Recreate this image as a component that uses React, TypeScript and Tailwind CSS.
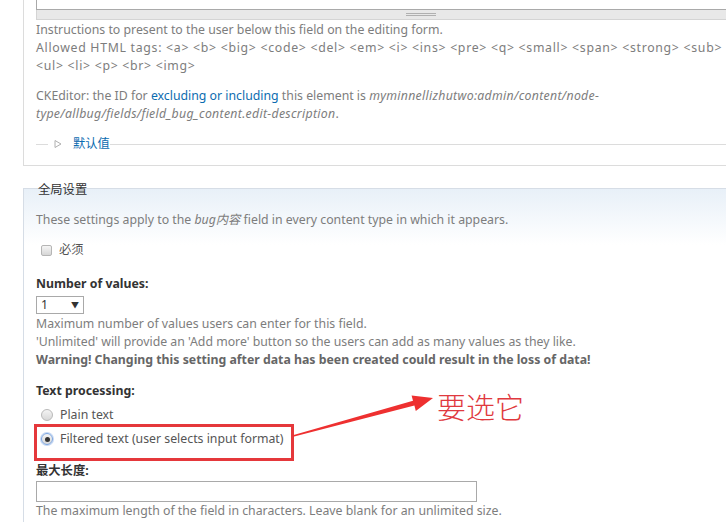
import React from "react";

const Radio = ({ checked }: { checked?: boolean }) => (
  <span
    className={`inline-flex w-[12px] h-[12px] rounded-full items-center justify-center bg-gradient-to-b from-[#f4f4f4] to-[#d8d8d8] ${
      checked ? "border border-[#7aa4e0] shadow-[0_0_0_1px_#c6d8f3]" : "border border-[#b9b9b9]"
    }`}
  >
    {checked && <span className="w-[5px] h-[5px] rounded-full bg-[#333]" />}
  </span>
);

export default function App() {
  return (
    <div
      className="relative w-[726px] h-[522px] overflow-hidden bg-white text-[12.3px] leading-[18px] text-[#7d7d7d]"
      style={{ fontFamily: '"Noto Sans", "Noto Sans CJK SC", sans-serif' }}
    >
      <div className="pl-[23px] w-[820px]">
        {/* Field description block */}
        <div className="border-l border-b border-[#dcdcdc] pl-[12px] h-[166px]">
          <div className="h-[10px] border-l border-b border-[#a9a9a9] bg-white" />
          <div className="h-[10px] bg-[#e8e8e8] border-l border-b border-[#d4d4d4] flex items-center">
            <div className="ml-[369px] w-[30px] flex flex-col gap-[1px]">
              <span className="h-px bg-[#b0b0b0]" />
              <span className="h-px bg-[#b0b0b0]" />
            </div>
          </div>
          <div className="mt-[1px] whitespace-nowrap">
            Instructions to present to the user below this field on the editing form.
            <br />
            <span className="tracking-[0.7px]">
              Allowed HTML tags: &lt;a&gt; &lt;b&gt; &lt;big&gt; &lt;code&gt; &lt;del&gt; &lt;em&gt; &lt;i&gt; &lt;ins&gt; &lt;pre&gt; &lt;q&gt; &lt;small&gt; &lt;span&gt; &lt;strong&gt; &lt;sub&gt; &lt;sup&gt;
            </span>
            <br />
            <span className="tracking-[0.7px]">&lt;ul&gt; &lt;li&gt; &lt;p&gt; &lt;br&gt; &lt;img&gt;</span>
          </div>
          <div className="mt-[12px] whitespace-nowrap">
            CKEditor: the ID for <span className="text-[#0b6cb0]">excluding or including</span> this element is{" "}
            <em className="tracking-[0.3px]">myminnellizhutwo:admin/content/node-</em>
            <br />
            <em className="tracking-[0.3px]">type/allbug/fields/field_bug_content.edit-description</em>.
          </div>
          <div className="mt-[12px] flex items-center h-[18px]">
            <span className="w-[12px] h-px bg-[#dcdcdc]" />
            <svg width="12" height="12" viewBox="0 0 12 12" className="ml-[4px]">
              <path d="M3 2.5 L9 6 L3 9.5 Z" fill="none" stroke="#b0b0b0" strokeWidth="1" />
            </svg>
            <span className="ml-[9px] text-[#0b6cb0]">默认值</span>
            <span className="flex-1 h-px bg-[#dcdcdc]" />
          </div>
        </div>

        {/* Global settings */}
        <div className="relative mt-[22px] border-l border-t border-[#d6dde6] h-[400px] bg-gradient-to-b from-[#e8f0f8] via-white via-[14%] to-white pl-[12px]">
          <span className="absolute left-[14px] -top-[8px] text-[#333] leading-[18px]">全局设置</span>
          <div className="pt-[22px]">
            These settings apply to the <em>bug内容</em> field in every content type in which it appears.
          </div>
          <div className="mt-[12px] flex items-center h-[18px]">
            <span className="ml-[5px] w-[11px] h-[11px] rounded-[2px] border border-[#b5b5b5] bg-gradient-to-b from-[#f5f5f5] to-[#d6d6d6]" />
            <span className="ml-[7px] text-[#555]">必须</span>
          </div>
          <div className="mt-[16px] font-bold text-[#333]">Number of values:</div>
          <div className="mt-[3px] w-[48px] h-[18px] border border-[#a9a9a9] bg-white flex items-center justify-between px-[4px] text-[#333]">
            <span>1</span>
            <span className="text-[8px] leading-none">▼</span>
          </div>
          <div className="mt-[1px]">
            Maximum number of values users can enter for this field.
            <br />
            'Unlimited' will provide an 'Add more' button so the users can add as many values as they like.
            <br />
            <strong className="text-[#666]">
              Warning! Changing this setting after data has been created could result in the loss of data!
            </strong>
          </div>
          <div className="mt-[13px] font-bold text-[#333]">Text processing:</div>
          <div className="mt-[6px] flex items-center h-[18px]">
            <span className="ml-[5px] flex">
              <Radio />
            </span>
            <span className="ml-[7px] text-[#555]">Plain text</span>
          </div>
          <div className="mt-[6px] flex items-center h-[18px]">
            <span className="ml-[5px] flex">
              <Radio checked />
            </span>
            <span className="ml-[7px] text-[#555]">Filtered text (user selects input format)</span>
          </div>
          <div className="mt-[14px] font-bold text-[#333]">最大长度:</div>
          <div className="mt-[1px] w-[441px] h-[21px] border border-[#a9a9a9] bg-white" />
          <div>The maximum length of the field in characters. Leave blank for an unlimited size.</div>
        </div>
      </div>

      {/* Annotation */}
      <div className="absolute left-[34px] top-[424px] w-[260px] h-[37px] border-[3px] border-[#e5383b]" />
      <svg className="absolute left-0 top-0" width="726" height="522" viewBox="0 0 726 522">
        <polygon
          points="292.8,435.2 413,400.8 411.6,395.5 433,398 415.8,410.9 414.4,405.6 293.2,436.8"
          fill="#ee3030"
        />
      </svg>
      <span
        className="absolute left-[437px] top-[388px] text-[29px] leading-[36px] font-light text-[#e0393e]"
        style={{ fontFamily: '"Noto Sans CJK SC", sans-serif' }}
      >
        要选它
      </span>
    </div>
  );
}
